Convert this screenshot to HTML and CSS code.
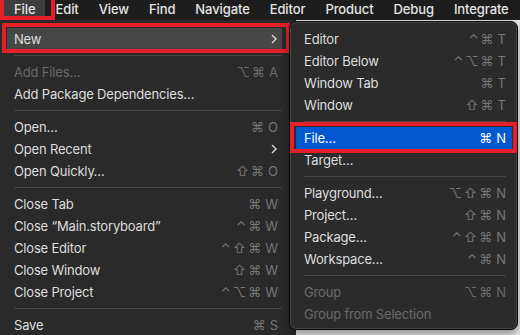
FILE: index.html
```html
<!DOCTYPE html>
<html lang="en">
<head>
    <meta charset="UTF-8">
    <title>Xcode File Menu</title>
    <link rel="stylesheet" href="styles.css">
</head>
<body>
    <div class="menubar">
        <span class="menubar-item active">File</span>
        <span class="menubar-item">Edit</span>
        <span class="menubar-item">View</span>
        <span class="menubar-item">Find</span>
        <span class="menubar-item">Navigate</span>
        <span class="menubar-item">Editor</span>
        <span class="menubar-item">Product</span>
        <span class="menubar-item">Debug</span>
        <span class="menubar-item">Integrate</span>
        <div class="mark mark-file"></div>
    </div>

    <div class="screen">
        <div class="menu file-menu">
            <div class="menu-row highlighted marked">
                <span class="label">New</span>
                <svg class="chevron" width="6" height="10" viewBox="0 0 6 10"><polyline points="1,1 5,5 1,9" /></svg>
            </div>
            <div class="menu-sep"></div>
            <div class="menu-row disabled"><span class="label">Add Files…</span><span class="keys">⌥⌘<b>A</b></span></div>
            <div class="menu-row"><span class="label">Add Package Dependencies…</span></div>
            <div class="menu-sep"></div>
            <div class="menu-row"><span class="label">Open…</span><span class="keys">⌘<b>O</b></span></div>
            <div class="menu-row">
                <span class="label">Open Recent</span>
                <svg class="chevron" width="6" height="10" viewBox="0 0 6 10"><polyline points="1,1 5,5 1,9" /></svg>
            </div>
            <div class="menu-row"><span class="label">Open Quickly…</span><span class="keys">⇧⌘<b>O</b></span></div>
            <div class="menu-sep"></div>
            <div class="menu-row"><span class="label">Close Tab</span><span class="keys">⌘<b>W</b></span></div>
            <div class="menu-row"><span class="label">Close “Main.storyboard”</span><span class="keys">⌃⌘<b>W</b></span></div>
            <div class="menu-row"><span class="label">Close Editor</span><span class="keys">⌃⇧⌘<b>W</b></span></div>
            <div class="menu-row"><span class="label">Close Window</span><span class="keys">⇧⌘<b>W</b></span></div>
            <div class="menu-row"><span class="label">Close Project</span><span class="keys">⌃⌥⌘<b>W</b></span></div>
            <div class="menu-sep"></div>
            <div class="menu-row"><span class="label">Save</span><span class="keys">⌘<b>S</b></span></div>
        </div>

        <div class="menu submenu">
            <div class="menu-row"><span class="label">Editor</span><span class="keys">⌃⌘<b>T</b></span></div>
            <div class="menu-row"><span class="label">Editor Below</span><span class="keys">⌃⌥⌘<b>T</b></span></div>
            <div class="menu-row"><span class="label">Window Tab</span><span class="keys">⌘<b>T</b></span></div>
            <div class="menu-row"><span class="label">Window</span><span class="keys">⇧⌘<b>T</b></span></div>
            <div class="menu-sep"></div>
            <div class="menu-row selected marked"><span class="label">File…</span><span class="keys">⌘<b>N</b></span></div>
            <div class="menu-row"><span class="label">Target…</span></div>
            <div class="menu-sep"></div>
            <div class="menu-row"><span class="label">Playground…</span><span class="keys">⌥⇧⌘<b>N</b></span></div>
            <div class="menu-row"><span class="label">Project…</span><span class="keys">⇧⌘<b>N</b></span></div>
            <div class="menu-row"><span class="label">Package…</span><span class="keys">⌃⇧⌘<b>N</b></span></div>
            <div class="menu-row"><span class="label">Workspace…</span><span class="keys">⌃⌘<b>N</b></span></div>
            <div class="menu-sep"></div>
            <div class="menu-row disabled"><span class="label">Group</span><span class="keys">⌥⌘<b>N</b></span></div>
            <div class="menu-row disabled"><span class="label">Group from Selection</span></div>
        </div>
    </div>
</body>
</html>
```

FILE: styles.css
```css
* {
    margin: 0;
    padding: 0;
    box-sizing: border-box;
}

body {
    font-family: Inter, 'Noto Sans', 'DejaVu Sans', sans-serif;
    font-size: 13px;
    background: #e9e9e9;
    color: #dedede;
    width: 520px;
    height: 335px;
    overflow: hidden;
}

/* top menu bar */

.menubar {
    position: relative;
    display: flex;
    height: 20px;
    padding-left: 4px;
    background: #1d1d1d;
    font-weight: 500;
    line-height: 19px;
    letter-spacing: -0.1px;
}

.menubar-item {
    padding: 0 10px;
    color: #e4e4e4;
}

.menubar-item.active {
    background: #3d3d3d;
}

/* red annotation boxes */

.mark {
    position: absolute;
    border: 4px solid #e5202a;
    pointer-events: none;
}

.mark-file {
    left: 0;
    top: -4px;
    width: 55px;
    height: 24px;
}

.marked {
    position: relative;
}

.marked::after {
    content: "";
    position: absolute;
    top: -5px;
    bottom: -3px;
    left: -5px;
    right: -8px;
    border: 4px solid #e5202a;
}

.submenu .marked::after {
    top: -5px;
    bottom: -4px;
    left: -6px;
    right: -5px;
}

/* menus */

.screen {
    position: relative;
    height: 315px;
}

.menu .label {
    letter-spacing: -0.18px;
}

.file-menu {
    width: 296px;
    height: 100%;
    padding: 8px 14px 0 7px;
    background: #2a2a2a;
}

.submenu {
    position: absolute;
    left: 289px;
    top: 1px;
    width: 229px;
    padding: 6px 5px 4px 6px;
    background: #2b2b2b;
    border: 1px solid #0c0c0c;
    border-radius: 7px;
    box-shadow: inset 0 0 0 1px #454545, 0 4px 10px rgba(0, 0, 0, 0.4);
}

.menu-row {
    display: flex;
    align-items: center;
    justify-content: space-between;
    height: 22px;
    padding: 0 4px 0 7px;
    border-radius: 4px;
}

.submenu .menu-row {
    padding: 0 6px 0 8px;
}

.menu-row.highlighted {
    background: #474747;
    border-radius: 0;
}

.menu-row.selected {
    background: #0157cf;
    border-radius: 0;
    color: #fff;
}

.menu-row.disabled {
    color: #6a6a6a;
}

.keys {
    color: #767676;
    letter-spacing: 2px;
}

.keys b {
    font-weight: 400;
    margin-left: 2px;
    letter-spacing: 0;
}

.selected .keys {
    color: #fff;
}

.disabled .keys {
    color: #6a6a6a;
}

.chevron {
    margin-right: 1px;
    fill: none;
    stroke: #d8d8d8;
    stroke-width: 1.4;
}

.menu-sep {
    height: 11px;
    display: flex;
    align-items: center;
    padding: 0 0 0 7px;
}

.menu-sep::before {
    content: "";
    flex: 1;
    height: 1px;
    background: #474747;
}

.submenu .menu-sep {
    padding: 0 6px 0 8px;
}
```
